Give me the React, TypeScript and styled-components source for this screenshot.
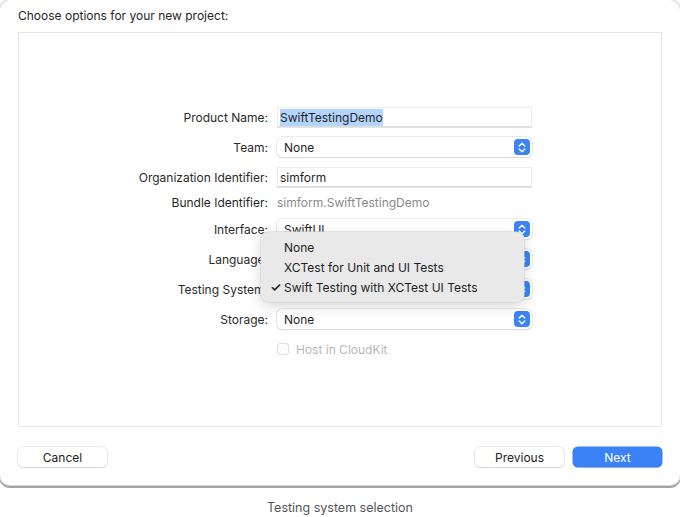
import React from "react";
import styled, { createGlobalStyle } from "styled-components";

const Global = createGlobalStyle`
  html, body { margin: 0; padding: 0; background: #ffffff; }
  body { font-family: Inter, "Liberation Sans", Arial, sans-serif; -webkit-font-smoothing: antialiased; }
`;

const Page = styled.div`
  width: 680px;
  height: 517px;
  display: flex;
  flex-direction: column;
  overflow: hidden;
`;

const Window = styled.div`
  width: 680px;
  height: 485px;
  box-sizing: border-box;
  background: #ffffff;
  border-radius: 10px;
  box-shadow: 0 0 0 1px #d4d4d4, 0 2px 0 1px #a4a4a4;
  padding: 9px 18px 0 18px;
  display: flex;
  flex-direction: column;
  flex-shrink: 0;
`;

const Title = styled.div`
  font-size: 12px;
  color: #262626;
  height: 14px;
  line-height: 14px;
  margin-bottom: 9px;
`;

const Panel = styled.div`
  height: 395px;
  box-sizing: border-box;
  border: 1px solid #e6e6e6;
  background: #ffffff;
  padding-top: 74px;
`;

const Form = styled.div`
  position: relative;
  display: grid;
  grid-template-columns: 249px 255px;
  column-gap: 9px;
  row-gap: 10px;
  align-items: center;
`;

const Label = styled.div`
  text-align: right;
  font-size: 12px;
  color: #2a2a2a;
  white-space: nowrap;
`;

const TextField = styled.div`
  height: 20px;
  box-sizing: border-box;
  background: #ffffff;
  border: 1px solid #ececec;
  border-bottom-color: #dcdcdc;
  box-shadow: 0 1px 0 #e4e4e4;
  font-size: 12px;
  color: #1f1f1f;
  padding: 0 2px;
  display: flex;
  align-items: center;
`;

const Selected = styled.span`
  background: #b4d5fe;
  padding: 1px 0;
`;

const Popup = styled.div`
  height: 20px;
  box-sizing: border-box;
  background: #ffffff;
  border-radius: 5px;
  box-shadow: 0 0 0 0.5px #d8d8d8, 0 1px 1.5px rgba(0, 0, 0, 0.14);
  font-size: 12px;
  color: #1f1f1f;
  padding: 0 2px 0 7px;
  display: flex;
  align-items: center;
  justify-content: space-between;
`;

const Stepper = styled.div`
  width: 16px;
  height: 16px;
  border-radius: 4px;
  background: #3a84f3;
  display: flex;
  align-items: center;
  justify-content: center;
`;

const Plain = styled.div<{ $muted?: boolean }>`
  height: 12px;
  line-height: 12px;
  font-size: 12px;
  color: ${(p) => (p.$muted ? "#8a8a8a" : "#1f1f1f")};
`;

const CheckRow = styled.div`
  display: flex;
  align-items: center;
  gap: 7px;
  font-size: 12px;
  color: #b8b8b8;
  height: 20px;
`;

const CheckBox = styled.div`
  width: 12px;
  height: 12px;
  box-sizing: border-box;
  border: 1px solid #dedede;
  border-radius: 3px;
  background: #fcfcfc;
`;

const Menu = styled.div`
  position: absolute;
  left: 242px;
  top: 125px;
  width: 263px;
  height: 70px;
  box-sizing: border-box;
  background: #e9e9ea;
  border-radius: 7px;
  box-shadow: 0 0 0 0.5px #cfcfcf, 0 4px 14px rgba(0, 0, 0, 0.16);
  padding: 5px 0;
  display: flex;
  flex-direction: column;
`;

const MenuItem = styled.div`
  height: 20.5px;
  display: flex;
  align-items: center;
  font-size: 12px;
  color: #1e1e1e;
  padding-left: 23px;
  position: relative;
`;

const Check = styled.span`
  position: absolute;
  left: 9px;
  font-size: 13px;
  font-weight: 600;
`;

const Footer = styled.div`
  display: flex;
  align-items: center;
  padding-top: 20px;
  gap: 9px;
`;

const Spacer = styled.div`
  flex: 1;
`;

const Button = styled.div<{ $primary?: boolean }>`
  width: 89px;
  height: 20px;
  border-radius: 5px;
  display: flex;
  align-items: center;
  justify-content: center;
  font-size: 12px;
  color: ${(p) => (p.$primary ? "#ffffff" : "#222222")};
  background: ${(p) => (p.$primary ? "#3b82f6" : "#ffffff")};
  box-shadow: ${(p) =>
    p.$primary
      ? "0 0 0 0.5px #3a7ce8, 0 1px 1px rgba(0,0,0,0.1)"
      : "0 0 0 0.5px #d6d6d6, 0 1px 1.5px rgba(0,0,0,0.14)"};
`;

const Caption = styled.div`
  text-align: center;
  font-size: 12.5px;
  color: #555555;
  margin-top: 15px;
`;

const StepIcon = () => (
  <Stepper>
    <svg width="8" height="11" viewBox="0 0 8 11" fill="none">
      <path d="M1.2 4 L4 1.3 L6.8 4" stroke="#ffffff" strokeWidth="1.3" strokeLinecap="round" strokeLinejoin="round" />
      <path d="M1.2 7 L4 9.7 L6.8 7" stroke="#ffffff" strokeWidth="1.3" strokeLinecap="round" strokeLinejoin="round" />
    </svg>
  </Stepper>
);

const PopupField = ({ value }: { value?: string }) => (
  <Popup>
    <span>{value}</span>
    <StepIcon />
  </Popup>
);

export default function App() {
  return (
    <>
      <Global />
      <Page>
        <Window>
          <Title>Choose options for your new project:</Title>
          <Panel>
            <Form>
              <Label>Product Name:</Label>
              <TextField>
                <Selected>SwiftTestingDemo</Selected>
              </TextField>

              <Label>Team:</Label>
              <PopupField value="None" />

              <Label>Organization Identifier:</Label>
              <TextField>simform</TextField>

              <Label as={Plain}>Bundle Identifier:</Label>
              <Plain $muted>simform.SwiftTestingDemo</Plain>

              <Label>Interface:</Label>
              <PopupField value="SwiftUI" />

              <Label>Language:</Label>
              <PopupField />

              <Label>Testing System:</Label>
              <PopupField />

              <Label>Storage:</Label>
              <PopupField value="None" />

              <div />
              <CheckRow>
                <CheckBox />
                Host in CloudKit
              </CheckRow>

              <Menu>
                <MenuItem>None</MenuItem>
                <MenuItem>XCTest for Unit and UI Tests</MenuItem>
                <MenuItem>
                  <Check>✓</Check>
                  Swift Testing with XCTest UI Tests
                </MenuItem>
              </Menu>
            </Form>
          </Panel>
          <Footer>
            <Button>Cancel</Button>
            <Spacer />
            <Button>Previous</Button>
            <Button $primary>Next</Button>
          </Footer>
        </Window>
        <Caption>Testing system selection</Caption>
      </Page>
    </>
  );
}
